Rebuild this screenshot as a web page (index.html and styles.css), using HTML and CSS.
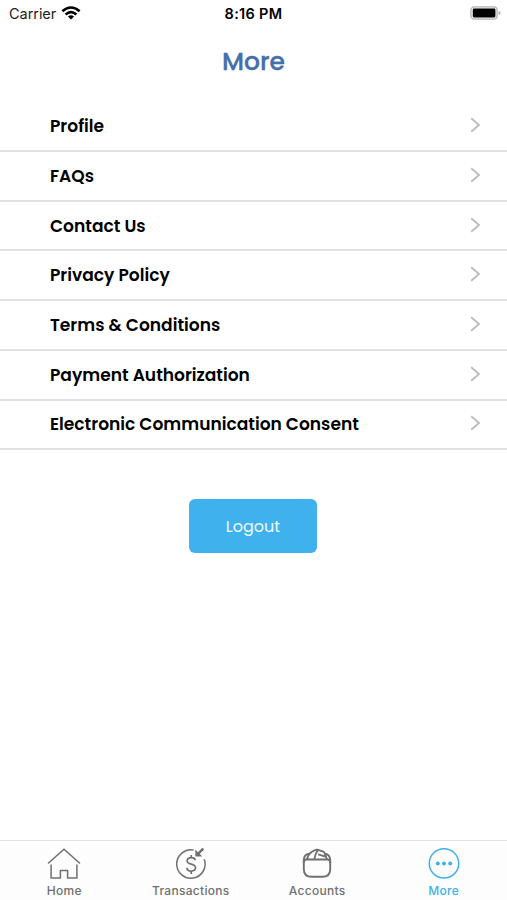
FILE: index.html
```html
<!DOCTYPE html>
<html lang="en">
<head>
<meta charset="utf-8">
<meta name="viewport" content="width=device-width, initial-scale=1">
<title>More</title>
<link rel="stylesheet" href="styles.css">
</head>
<body>
<div class="screen">
  <header class="status">
    <div class="carrier"><span>Carrier</span>
      <svg class="wifi" width="20" height="14" viewBox="0 0 20 14" fill="none" stroke="#000" stroke-width="2.6"><path d="M1.4 5.2Q10 -2.2 18.6 5.2M4.6 8.4Q10 3.9 15.4 8.4"/><path d="M10 13.6L6.9 10.5Q10 8 13.1 10.5Z" fill="#000" stroke="none"/></svg>
    </div>
    <time class="clock">8:16 PM</time>
    <svg class="battery" width="31" height="14" viewBox="0 0 31 14"><rect x=".9" y=".9" width="26.2" height="12.2" rx="3.4" fill="#eee" stroke="#b5b5b5" stroke-width="1.3"/><rect x="2.8" y="2.5" width="22.6" height="9" rx="1.4" fill="#000"/><path d="M28.6 4.9Q30.6 5.6 30.6 7T28.6 9.1Z" fill="#aaa"/></svg>
  </header>
  <h1 class="title">More</h1>
  <ul class="menu">
    <li class="row"><span class="label">Profile</span><svg class="chevron" viewBox="0 0 11 16"><path d="M1.2 1.2L9 8L1.2 14.8"/></svg></li>
    <li class="row"><span class="label">FAQs</span><svg class="chevron" viewBox="0 0 11 16"><path d="M1.2 1.2L9 8L1.2 14.8"/></svg></li>
    <li class="row"><span class="label">Contact Us</span><svg class="chevron" viewBox="0 0 11 16"><path d="M1.2 1.2L9 8L1.2 14.8"/></svg></li>
    <li class="row"><span class="label">Privacy Policy</span><svg class="chevron" viewBox="0 0 11 16"><path d="M1.2 1.2L9 8L1.2 14.8"/></svg></li>
    <li class="row"><span class="label">Terms &amp; Conditions</span><svg class="chevron" viewBox="0 0 11 16"><path d="M1.2 1.2L9 8L1.2 14.8"/></svg></li>
    <li class="row"><span class="label">Payment Authorization</span><svg class="chevron" viewBox="0 0 11 16"><path d="M1.2 1.2L9 8L1.2 14.8"/></svg></li>
    <li class="row"><span class="label">Electronic Communication Consent</span><svg class="chevron" viewBox="0 0 11 16"><path d="M1.2 1.2L9 8L1.2 14.8"/></svg></li>
  </ul>
  <button class="logout">Logout</button>
  <nav class="tabs">
    <a class="tab"><svg class="icon" viewBox="0 0 34 34"><path d="M1 16.5L17 2.3L33 16.5M4.1 17.5V31H13.4V23.5H20.6V31H29.9V17.5"/></svg><span>Home</span></a>
    <a class="tab"><svg class="icon" viewBox="0 0 34 34"><path d="M19.5 3.1A14.2 14.2 0 1 0 30.3 12.3"/><path d="M21.3 13.2C20.9 11.2 19.3 10.6 17.2 10.6C14.8 10.6 13.1 11.8 13.1 13.8C13.1 18.4 21.5 15.7 21.5 20.6C21.5 22.7 19.6 24.1 17.2 24.1C14.8 24.1 13.1 22.9 12.8 20.8M17.2 8V10.6M17.2 24.1V27" stroke-width="1.7"/><path d="M29.3 1.6L24 6.9" stroke-width="2.5"/><path d="M21.3 2.6V9.4H28.3L25.9 7L23.7 4.9Z" fill="currentColor" stroke="none"/></svg><span>Transactions</span></a>
    <a class="tab"><svg class="icon wallet" viewBox="0 0 34 34"><path d="M6.5 12.5H27.5Q30.2 12.5 30.2 15.2V22Q30.2 29.8 22.4 29.8H11.6Q3.8 29.8 3.8 22V15.2Q3.8 12.5 6.5 12.5Z"/><path d="M3.8 16V13Q4 7.3 9 6.7M30.2 16V13Q30 7.3 25 6.7M7 12.5Q8 7.5 11.5 5L15.5 2.9Q17.5 2.2 19.5 3.3L23.3 4.7Q24.4 5.1 25 6.9L27 12.5M14.3 12.5Q14.8 7.4 17.8 3.2M18.2 7.3L25.5 9.6"/></svg><span>Accounts</span></a>
    <a class="tab active"><svg class="icon" viewBox="0 0 34 34"><circle cx="17" cy="16.4" r="14.7"/><g fill="currentColor" stroke="none"><circle cx="10.8" cy="16.4" r="2"/><circle cx="17" cy="16.4" r="2"/><circle cx="23.2" cy="16.4" r="2"/></g></svg><span>More</span></a>
  </nav>
</div>
</body>
</html>
```
FILE: styles.css
```css
* { box-sizing: border-box; }
body { margin: 0; background: #fff; color: #000; font-family: Inter, "Liberation Sans", sans-serif; }
.screen { height: 900px; display: flex; flex-direction: column; overflow: hidden; }
.status { height: 27px; padding: 0 6px 0 9px; display: grid; grid-template-columns: 1fr auto 1fr; align-items: center; font-size: 14.5px; }
.carrier { display: flex; align-items: center; gap: 5px; color: #222; letter-spacing: -.05px; }
.wifi { display: block; margin-top: -1px; }
.clock { font-weight: 600; letter-spacing: .3px; margin-right: 3px; }
.battery { justify-self: end; margin-top: -1px; }
.title { margin: 0; height: 67px; line-height: 69px; text-align: center; font-family: Poppins, Inter, sans-serif; font-size: 25px; font-weight: 500; -webkit-text-stroke: .3px #446fab; color: #446fab; }
.menu { list-style: none; margin: 8.4px 0 0; padding: 0; }
.row { height: 49.7px; padding: 0 26px 0 50px; display: flex; align-items: center; justify-content: space-between; border-bottom: 2px solid #e1e1e1; }
.label { font-family: Poppins, Inter, sans-serif; font-size: 17.07px; font-weight: 600; white-space: nowrap; }
.chevron { width: 11px; height: 16px; margin-top: -2px; fill: none; stroke: #bcbcbc; stroke-width: 1.8; }
.logout { width: 128px; height: 54px; margin: 48.5px 0 0 189px; padding-top: 2px; border: 0; border-radius: 6px; background: #3fb1ed; color: #effaff; font: 400 16px Poppins, Inter, sans-serif; }
.tabs { margin-top: auto; height: 60px; border-top: 1px solid #e2e2e2; display: grid; grid-template-columns: repeat(4, 1fr); padding-left: 1px; background: #fdfdfd; }
.tab { display: flex; flex-direction: column; align-items: center; padding-top: 6px; color: #707070; font-size: 12px; font-weight: 500; line-height: 16px; letter-spacing: .3px; }
.icon { width: 34px; height: 34px; margin-bottom: 2px; fill: none; stroke: currentColor; stroke-width: 1.5; }
.wallet { stroke-width: 1.9; }
.active { color: #3eb0e8; }
```
